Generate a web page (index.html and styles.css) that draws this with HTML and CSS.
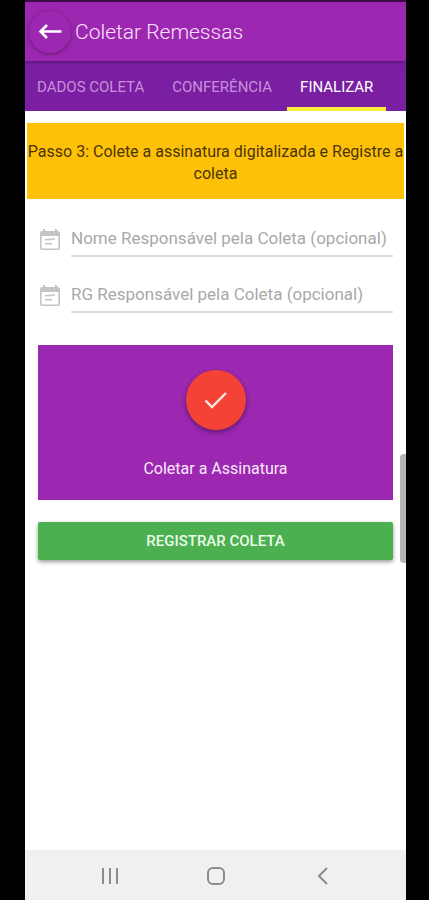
FILE: index.html
```html
<!DOCTYPE html>
<html lang="pt-BR">
<head>
<meta charset="utf-8">
<meta name="viewport" content="width=device-width, initial-scale=1">
<title>Coletar Remessas</title>
<link rel="stylesheet" href="styles.css">
</head>
<body>
<div class="screen">
  <header class="app-bar">
    <button class="back" type="button" aria-label="Voltar">
      <svg width="24" height="24" viewBox="0 0 24 24" fill="none" stroke="currentColor" stroke-width="2.600"><path d="M23.500 11.500H2.500M9 5 2.500 11.500 9 18"/></svg>
    </button>
    <h1 class="title">Coletar Remessas</h1>
  </header>
  <nav class="tabs">
    <a class="tab" href="#dados">DADOS COLETA</a>
    <a class="tab" href="#conferencia">CONFERÊNCIA</a>
    <a class="tab tab-active" href="#finalizar" aria-current="page">FINALIZAR</a>
  </nav>
  <main class="content">
    <p class="notice">Passo 3: Colete a assinatura digitalizada e Registre a coleta</p>
    <form class="form">
      <div class="field">
        <label class="field-icon" for="nome" aria-label="Nome Responsável pela Coleta">
          <svg width="20" height="22" viewBox="0 0 20 22"><path fill="currentColor" fill-rule="evenodd" d="M3 0h2v2h10V0h2v2h1a2 2 0 0 1 2 2v15a2 2 0 0 1-2 2H2a2 2 0 0 1-2-2V4a2 2 0 0 1 2-2h1zM1.600 7v12.400h16.800V7zM5 10l10-.8v1.500l-10 .8zM5 14h7v1.500H5z"/></svg>
        </label>
        <input class="input" id="nome" type="text" placeholder="Nome Responsável pela Coleta (opcional)">
      </div>
      <div class="field">
        <label class="field-icon" for="rg" aria-label="RG Responsável pela Coleta">
          <svg width="20" height="22" viewBox="0 0 20 22"><path fill="currentColor" fill-rule="evenodd" d="M3 0h2v2h10V0h2v2h1a2 2 0 0 1 2 2v15a2 2 0 0 1-2 2H2a2 2 0 0 1-2-2V4a2 2 0 0 1 2-2h1zM1.600 7v12.400h16.800V7zM5 10l10-.8v1.500l-10 .8zM5 14h7v1.500H5z"/></svg>
        </label>
        <input class="input" id="rg" type="text" placeholder="RG Responsável pela Coleta (opcional)">
      </div>
      <section class="signature">
        <button class="sign" type="button" aria-labelledby="sign-label">
          <svg width="24" height="20" viewBox="0 0 24 20" fill="none" stroke="currentColor" stroke-width="2.400"><path d="M1.500 10.500 8 17 22 3"/></svg>
        </button>
        <span id="sign-label">Coletar a Assinatura</span>
      </section>
      <button class="submit" type="button">REGISTRAR COLETA</button>
    </form>
    <div class="scrollbar"></div>
  </main>
  <footer class="system-bar">
    <button class="system" type="button" aria-label="Recentes">
      <svg width="20" height="20" viewBox="0 0 20 20" fill="none" stroke="currentColor" stroke-width="2"><path d="M3 2v16M10 2v16M17 2v16"/></svg>
    </button>
    <button class="system" type="button" aria-label="Início">
      <svg width="20" height="20" viewBox="0 0 20 20" fill="none" stroke="currentColor" stroke-width="2"><rect x="2" y="2" width="16" height="16" rx="5"/></svg>
    </button>
    <button class="system" type="button" aria-label="Voltar">
      <svg width="20" height="20" viewBox="0 0 20 20" fill="none" stroke="currentColor" stroke-width="2"><path d="M15 2 7 10l8 8"/></svg>
    </button>
  </footer>
</div>
</body>
</html>
```
FILE: styles.css
```css
* {
  box-sizing: border-box;
}

body {
  margin: 0;
  background: #000;
  font-family: Roboto, sans-serif;
  font-size: 16px;
  color: #4a3508;
}

button {
  padding: 0;
  border: 0;
  font: inherit;
}

svg {
  display: block;
}

.screen {
  display: flex;
  flex-direction: column;
  min-height: 100vh;
  margin: 0 23px 0 25px;
  border-top: 2px solid #3d0f48;
  background: #fff;
}

.app-bar {
  position: relative;
  display: flex;
  align-items: center;
  gap: 4px;
  height: 59px;
  padding: 0 4px;
  background: #9c27b0;
  box-shadow: 0 1px 4px rgba(0, 0, 0, 0.4);
}

.back {
  display: grid;
  place-items: center;
  width: 42px;
  height: 42px;
  border-radius: 50%;
  background: #9c27b0;
  color: #fff;
  box-shadow: 0 1px 4px rgba(0, 0, 0, 0.35);
}

.title {
  margin: 0;
  font-size: 21px;
  font-weight: 300;
  color: #f9e3fc;
}

.tabs {
  display: flex;
  gap: 2px;
  height: 50px;
  background: #7b1fa2;
}

.tab {
  display: flex;
  align-items: center;
  padding: 6px 13px 0 12px;
  border-bottom: 4px solid transparent;
  font-size: 15px;
  color: #c78fdb;
  text-decoration: none;
}

.tab + .tab {
  padding-left: 13px;
}

.tab-active {
  border-color: #ffeb3b;
  color: #fff;
}

.content {
  position: relative;
  flex: 1;
  padding: 12px 2px;
}

.notice {
  margin: 0;
  padding: 18px 0 14px;
  background: #ffc107;
  line-height: 22px;
  text-align: center;
}

.form {
  display: flex;
  flex-direction: column;
  padding: 18px 11px;
}

.field {
  display: flex;
  gap: 11px;
  height: 40px;
  margin-bottom: 16px;
}

.field-icon {
  padding: 12px 0 0 2px;
  color: #c4c4c4;
}

.input {
  flex: 1;
  min-width: 0;
  padding: 4px 0 0;
  border: 0;
  border-bottom: 2px solid #dedede;
  background: transparent;
  font: inherit;
  font-size: 17px;
  color: #333;
}

.input::placeholder {
  color: #a8a8a8;
}

.signature {
  display: flex;
  flex-direction: column;
  align-items: center;
  gap: 29px;
  margin: 16px 0 22px;
  padding: 25px 0 22px;
  background: #9c27b0;
  color: #fbeafd;
}

.sign {
  display: grid;
  place-items: center;
  width: 60px;
  height: 60px;
  border-radius: 50%;
  background: #f44336;
  color: #ffe9df;
  box-shadow: 0 2px 5px rgba(0, 0, 0, 0.4);
}

.submit {
  height: 38px;
  border-radius: 2px;
  background: #4caf50;
  color: #e9fbe9;
  font-size: 15px;
  font-weight: 500;
  box-shadow: 0 2px 4px rgba(0, 0, 0, 0.4);
}

.scrollbar {
  position: absolute;
  top: 343px;
  right: 0;
  width: 6px;
  height: 109px;
  border-radius: 4px 0 0 4px;
  background: #b5b5b5;
}

.system-bar {
  display: flex;
  justify-content: center;
  gap: 86px;
  height: 50px;
  padding-top: 2px;
  background: #f0f0f0;
}

.system {
  display: grid;
  place-items: center;
  width: 20px;
  background: transparent;
  color: #8c8c8c;
}
```
